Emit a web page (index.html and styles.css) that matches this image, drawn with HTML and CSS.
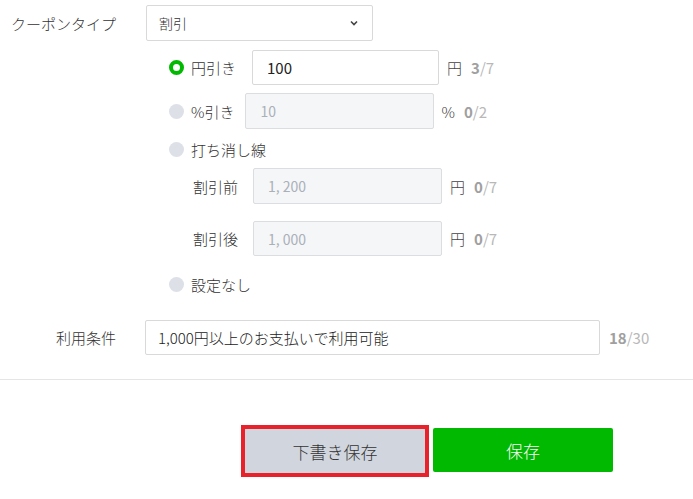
FILE: index.html
```html
<!DOCTYPE html>
<html lang="ja">
<head>
  <meta charset="UTF-8">
  <title>クーポン設定</title>
  <link rel="stylesheet" href="styles.css">
</head>
<body>
  <div class="form">
    <div class="field type-row">
      <div class="field-label">クーポンタイプ</div>
      <div class="select">
        <span>割引</span>
        <svg class="chevron" width="8" height="6" viewBox="0 0 8 6"><path d="M1 1.5 L4 4.5 L7 1.5" fill="none" stroke="#444" stroke-width="1.6"/></svg>
      </div>
    </div>

    <div class="options">
      <div class="opt row-yen">
        <span class="radio checked"></span>
        <span class="opt-label">円引き</span>
        <div class="input">100</div>
        <span class="unit">円</span>
        <span class="count"><b>3</b>/7</span>
      </div>

      <div class="opt row-pct">
        <span class="radio"></span>
        <span class="opt-label">%引き</span>
        <div class="input disabled">10</div>
        <span class="unit pct">%</span>
        <span class="count"><b>0</b>/2</span>
      </div>

      <div class="opt row-strike">
        <span class="radio"></span>
        <span class="opt-label">打ち消し線</span>
      </div>

      <div class="sub row-before">
        <span class="sub-label">割引前</span>
        <div class="input disabled">1, 200</div>
        <span class="unit">円</span>
        <span class="count"><b>0</b>/7</span>
      </div>

      <div class="sub row-after">
        <span class="sub-label">割引後</span>
        <div class="input disabled">1, 000</div>
        <span class="unit">円</span>
        <span class="count"><b>0</b>/7</span>
      </div>

      <div class="opt row-none">
        <span class="radio"></span>
        <span class="opt-label">設定なし</span>
      </div>
    </div>

    <div class="field usage-row">
      <div class="field-label">利用条件</div>
      <div class="input wide">1,000円以上のお支払いで利用可能</div>
      <span class="count"><b>18</b>/30</span>
    </div>
  </div>

  <div class="footer">
    <button class="btn draft">下書き保存</button>
    <button class="btn save">保存</button>
  </div>
</body>
</html>
```

FILE: styles.css
```css
* {
  margin: 0;
  padding: 0;
  box-sizing: border-box;
}

body {
  font-family: "Noto Sans CJK JP", "Noto Sans", sans-serif;
  font-size: 15px;
  font-weight: 300;
  color: #333;
  background: #fff;
  width: 693px;
  height: 499px;
  overflow: hidden;
}

.form {
  display: flex;
  flex-direction: column;
}

.field {
  display: flex;
  align-items: center;
}

.field-label {
  width: 116px;
  text-align: right;
  margin-right: 30px;
  color: #333;
}

.type-row {
  margin-top: 5px;
}

.usage-row .field-label {
  margin-right: 29px;
}

.select {
  width: 227px;
  height: 36px;
  border: 1px solid #d9d9d9;
  border-radius: 2px;
  display: flex;
  align-items: center;
  justify-content: space-between;
  padding: 0 14px 0 12px;
  font-size: 14px;
}

.options {
  display: flex;
  flex-direction: column;
  padding-left: 169px;
}

.opt,
.sub {
  display: flex;
  align-items: center;
}

.radio {
  width: 15px;
  height: 15px;
  border-radius: 50%;
  background: #dde0e7;
  margin-right: 7px;
  flex-shrink: 0;
}

.radio.checked {
  background: #fff;
  border: 4px solid #00b900;
}

.opt-label {
  margin-right: 16px;
}

.input {
  height: 36px;
  border: 1px solid #d9d9d9;
  border-radius: 2px;
  display: flex;
  align-items: center;
  padding: 0 14px;
  width: 187px;
  font-size: 15px;
  font-weight: 400;
  color: #222;
}

.input.disabled {
  background: #f5f6f8;
  border-color: #dcdde0;
  color: #aab0b8;
  font-size: 14px;
  width: 189px;
}

.input.wide {
  width: 455px;
  padding: 0 12px;
  font-weight: 300;
}

.unit {
  margin-left: 8px;
  color: #444;
}

.unit.pct {
  margin-left: 7px;
}

.count {
  margin-left: 9px;
  color: #b8b8b8;
  font-weight: 400;
}

.count b {
  color: #a0a0a0;
  font-weight: 700;
}

.usage-row .count {
  margin-left: 9px;
}

.row-yen {
  margin-top: 9px;
}

.row-yen .input {
  height: 35px;
}

.row-pct {
  margin-top: 8px;
}

.row-pct .opt-label {
  margin-right: 11px;
}

.row-strike {
  margin-top: 10px;
  height: 20px;
}

.sub {
  padding-left: 24px;
}

.sub-label {
  margin-right: 15px;
}

.row-before {
  margin-top: 9px;
}

.row-after {
  margin-top: 17px;
}

.row-after .input {
  height: 35px;
}

.row-none {
  margin-top: 18px;
  height: 20px;
}

.usage-row {
  margin-top: 26px;
}

.usage-row .input {
  height: 35px;
}

.footer {
  margin-top: 24px;
  border-top: 1px solid #e5e5e5;
  display: flex;
  padding: 49px 0 0 245px;
  gap: 8px;
}

.btn {
  width: 180px;
  height: 44px;
  border: none;
  border-radius: 2px;
  font-family: inherit;
  font-size: 17px;
  font-weight: 300;
}

.btn.draft {
  background: #d1d6de;
  color: #333;
  border-radius: 0;
  outline: 4px solid #e8212b;
}

.btn.save {
  background: #00b900;
  color: #fff;
  margin-top: -1px;
}
```
